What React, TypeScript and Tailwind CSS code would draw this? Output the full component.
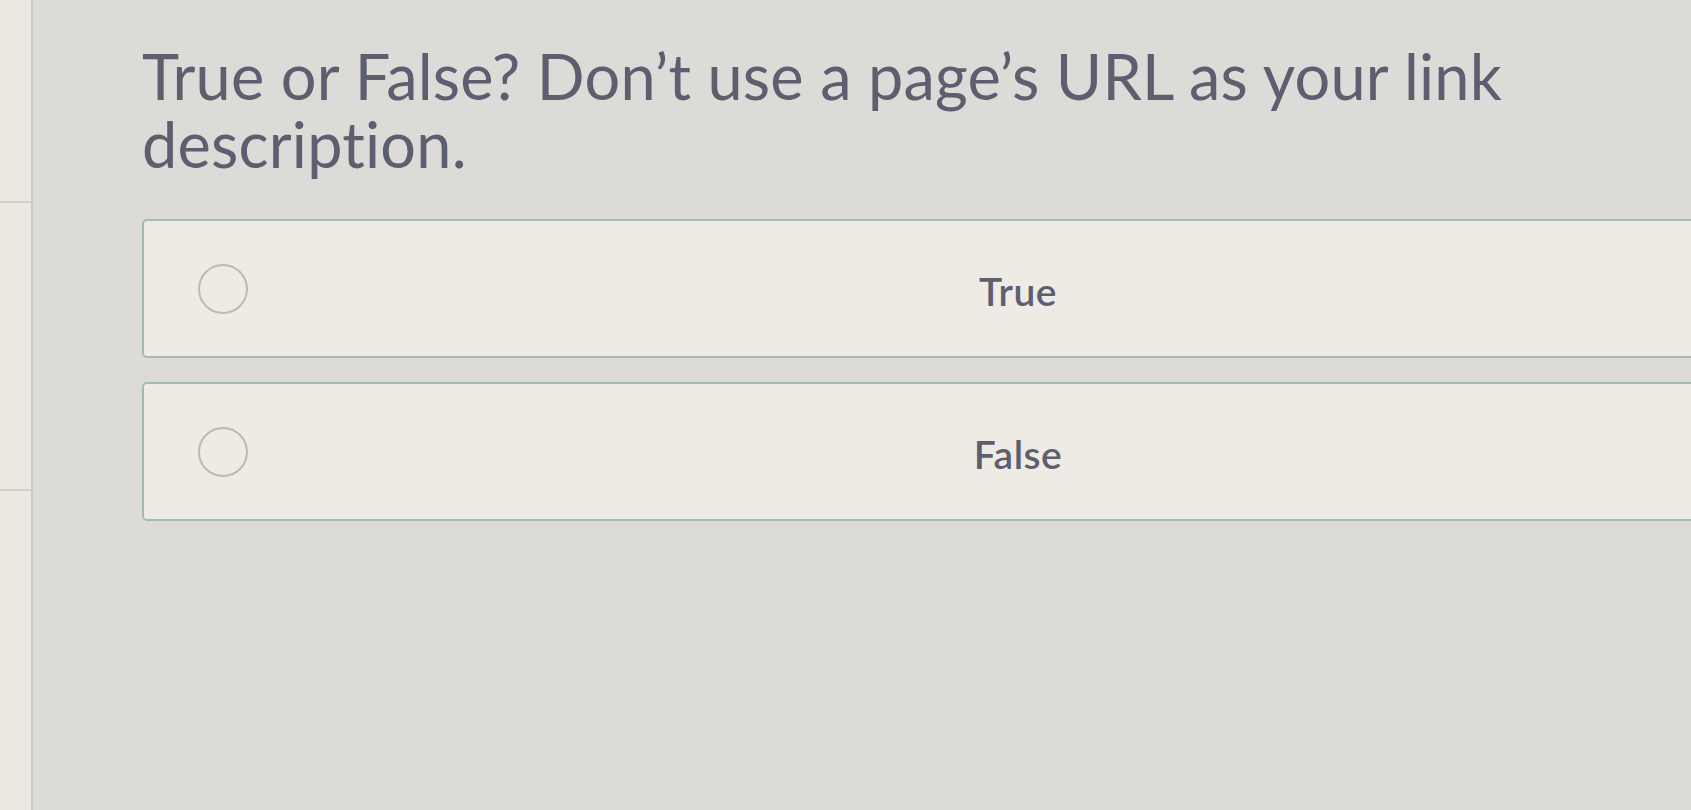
import React from "react";

const options = ["True", "False"];

const Radio = () => (
  <span className="block h-[50px] w-[50px] shrink-0 rounded-full border-2 border-[#bdbab4]" />
);

export default function App() {
  return (
    <div className="flex h-[810px] w-[1691px] overflow-hidden bg-[#dcdbd7] font-['Lato',sans-serif] text-[#5c5d6d]">
      {/* sidebar edge */}
      <aside className="flex w-[33px] shrink-0 flex-col border-r-2 border-[#c9cbc8] bg-[#ebe7e1]">
        <div className="h-[203px] border-b-2 border-[#cfcecb]" />
        <div className="h-[288px] border-b-2 border-[#cfcecb]" />
      </aside>

      <main className="flex min-w-0 flex-1 flex-col pl-[109px]">
        <h1 className="mt-[42px] w-[1480px] text-[63px] leading-[68px] tracking-[0.2px] text-[#5d5e6f]">
          True or False? Don’t use a page’s URL as your link description.
        </h1>

        <div className="mt-[41px] flex w-[1752px] flex-col gap-[24px]">
          {options.map((label) => (
            <label
              key={label}
              className="relative flex h-[139px] items-center rounded-[5px] border-2 border-[#a3bab7] bg-[#eeebe5] pl-[54px]"
            >
              <Radio />
              <span className="absolute left-1/2 top-1/2 -translate-x-1/2 -translate-y-[46%] text-[39px] font-semibold tracking-[0.5px] text-[#5e5f6e]">
                {label}
              </span>
            </label>
          ))}
        </div>
      </main>
    </div>
  );
}
